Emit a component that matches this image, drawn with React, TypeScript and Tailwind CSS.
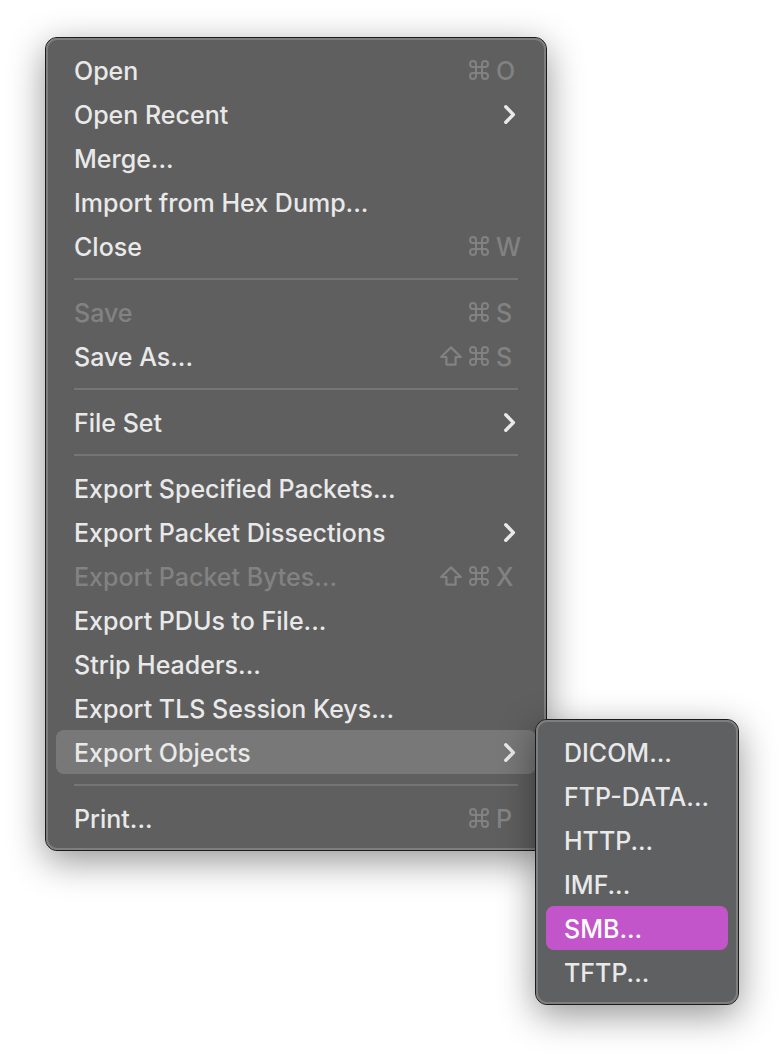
import React from "react";

type Item = {
  label: string;
  keys?: { shift?: boolean; letter: string };
  disabled?: boolean;
  submenu?: string[];
  hasSubmenu?: boolean;
};

const groups: Item[][] = [
  [
    { label: "Open", keys: { letter: "O" } },
    { label: "Open Recent", hasSubmenu: true },
    { label: "Merge..." },
    { label: "Import from Hex Dump..." },
    { label: "Close", keys: { letter: "W" } },
  ],
  [
    { label: "Save", keys: { letter: "S" }, disabled: true },
    { label: "Save As...", keys: { shift: true, letter: "S" } },
  ],
  [{ label: "File Set", hasSubmenu: true }],
  [
    { label: "Export Specified Packets..." },
    { label: "Export Packet Dissections", hasSubmenu: true },
    { label: "Export Packet Bytes...", keys: { shift: true, letter: "X" }, disabled: true },
    { label: "Export PDUs to File..." },
    { label: "Strip Headers..." },
    { label: "Export TLS Session Keys..." },
    {
      label: "Export Objects",
      hasSubmenu: true,
      submenu: ["DICOM...", "FTP-DATA...", "HTTP...", "IMF...", "SMB...", "TFTP..."],
    },
  ],
  [{ label: "Print...", keys: { letter: "P" } }],
];

const activeExport = "SMB...";

function CommandIcon() {
  return (
    <svg className="h-5 w-5" viewBox="2 2 20 20" fill="none" stroke="currentColor" strokeWidth="2" aria-hidden="true">
      <path d="M15 6v12a3 3 0 1 0 3-3H6a3 3 0 1 0 3 3V6a3 3 0 1 0-3 3h12a3 3 0 1 0-3-3" />
    </svg>
  );
}

function ShiftIcon() {
  return (
    <svg className="h-5 w-[22px]" viewBox="0 0 22 20" fill="none" stroke="currentColor" strokeWidth="2.2" strokeLinejoin="round" aria-hidden="true">
      <path d="M11 1.4 20.8 11H15.6V18.6H6.4V11H1.2Z" />
    </svg>
  );
}

function ChevronIcon() {
  return (
    <svg className="h-5 w-3" viewBox="0 0 12 20" fill="none" stroke="currentColor" strokeWidth="3.4" strokeLinecap="round" strokeLinejoin="round" aria-hidden="true">
      <path d="M1.8 2.8 9.4 10.6 1.8 18.2" />
    </svg>
  );
}

function Panel({ className, children }: { className: string; children: React.ReactNode }) {
  return (
    <div className={`rounded-xl border border-[#1c1c1c] shadow-[0_10px_36px_rgba(0,0,0,0.42)] ${className}`}>
      <ul role="menu" className="rounded-[11px] border-2 border-[#7e7e7e] p-2">
        {children}
      </ul>
    </div>
  );
}

function MenuRow({ item }: { item: Item }) {
  const open = Boolean(item.submenu);
  return (
    <li role="none" className="relative">
      <button
        type="button"
        role="menuitem"
        disabled={item.disabled}
        aria-haspopup={item.hasSubmenu ? "menu" : undefined}
        aria-expanded={item.hasSubmenu ? open : undefined}
        className={`flex h-11 w-full items-center justify-between rounded-lg px-[18px] text-left whitespace-nowrap ${
          open ? "bg-[#787878]" : ""
        } ${item.disabled ? "text-[#828282]" : "text-[#e9e9e9]"}`}
      >
        <span className="pt-1">{item.label}</span>
        {item.hasSubmenu && (
          <span className="pr-0.5">
            <ChevronIcon />
          </span>
        )}
        {item.keys && (
          <span className="flex items-center gap-[7px] text-[#828282]">
            {item.keys.shift && <ShiftIcon />}
            <CommandIcon />
            <span className="w-[22px] pt-1">{item.keys.letter}</span>
          </span>
        )}
      </button>
      {item.submenu && (
        <Panel className="absolute -top-[11px] left-full -ml-px w-[204px] bg-[#5f6061]">
          {item.submenu.map((label) => (
            <li role="none" key={label}>
              <button
                type="button"
                role="menuitem"
                className={`flex h-11 w-full items-center rounded-lg px-[18px] whitespace-nowrap ${
                  label === activeExport ? "bg-[#c255ca] text-white" : "text-[#e9e9e9]"
                }`}
              >
                <span className="pt-1">{label}</span>
              </button>
            </li>
          ))}
        </Panel>
      )}
    </li>
  );
}

export default function App() {
  return (
    <main className="min-h-screen bg-white pt-[37px] pb-12 pl-[45px] font-['Inter','Liberation_Sans',sans-serif] text-[25px] font-medium">
      <Panel className="w-[502px] bg-[#5f5f5f]">
        {groups.map((group, i) => (
          <React.Fragment key={group[0].label}>
            {i > 0 && <li role="separator" className="mx-[18px] my-2.5 h-0.5 bg-[#757575]" />}
            {group.map((item) => (
              <MenuRow key={item.label} item={item} />
            ))}
          </React.Fragment>
        ))}
      </Panel>
    </main>
  );
}
